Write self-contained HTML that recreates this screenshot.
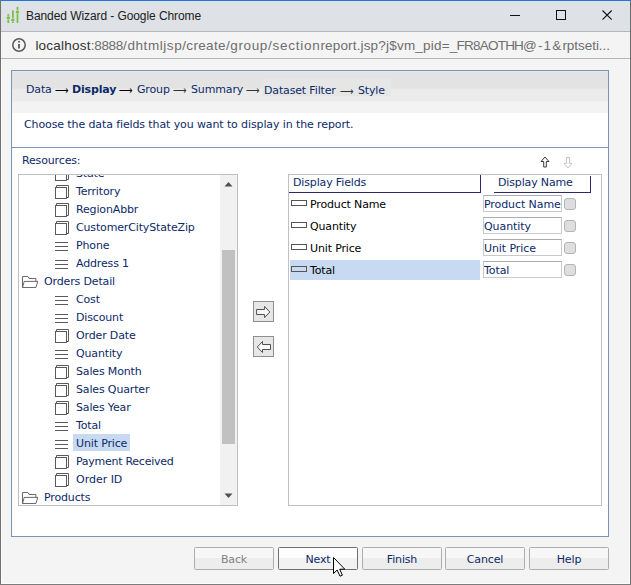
<!DOCTYPE html>
<html><head><meta charset="utf-8"><title>Banded Wizard - Google Chrome</title>
<style>
*{box-sizing:border-box;margin:0;padding:0}
html,body{width:631px;height:585px;overflow:hidden;background:#f4f4f4}
body{position:relative;font-family:"DejaVu Sans","Liberation Sans",sans-serif;font-size:11px;color:#0c2a68;letter-spacing:-0.15px}
.abs{position:absolute}
#titlebar{left:0;top:0;width:631px;height:32px;background:#dee1e6;border-top:1px solid #2277d4;border-bottom:1px solid #b4b6ba}
#title{left:26px;top:9px;font:12px "Liberation Sans",sans-serif;color:#202020;letter-spacing:-0.08px;white-space:nowrap}
#addr{left:0;top:32px;width:631px;height:27px;background:#f4f4f4;border-bottom:1px solid #b6b6b6}
#url{left:35.4px;top:38px;font:13.5px/16px "Liberation Sans",sans-serif;color:#6e6e6e;letter-spacing:-0.03px;white-space:nowrap}
#url span{position:absolute;top:0;white-space:pre}
#url span.h{color:#333}
#lborder{left:0;top:0;width:1px;height:585px;background:#6f6f6f}
#rborder{left:630px;top:1px;width:1px;height:584px;background:#6c6c6c}
#inner{left:1px;top:59px;width:629px;height:525px;border:1px solid #fcfcfc;border-top:none}
#bborder{left:0;top:584px;width:631px;height:1px;background:#7c7c7c}

#panel{left:11px;top:70px;width:598px;height:467px;border:1px solid #7894b8;background:#fff}
#crumbs{left:0;top:0;width:596px;height:42px;background:linear-gradient(#e8e8e8 0,#e8e8e8 1px,#e3e3e3 1px,#e3e3e3 17px,#e7e7e7 18px,#ebebeb 18px,#ebebeb 30px,#f3f3f3 31px,#f3f3f3 100%)}
#cbox{left:250px;top:8px;width:129px;height:17px;background:#e6e6e6}
.cr{top:12px;white-space:nowrap;line-height:13px}
.ar{top:13px;color:#000;transform:scaleX(0.87);transform-origin:0 50%}
#sep{left:0;top:76px;width:596px;height:1px;background:#7894b8}
#listL{left:18px;top:174px;width:220px;height:332px;border:1px solid #c0c0c0;background:#fff;overflow:hidden}
#listL .inner{left:0;top:0;width:201px;height:330px;overflow:hidden}
.ic{position:absolute;display:block}
.tl{position:absolute;white-space:nowrap;line-height:16px;height:16px;padding:0 2px}
.tl.sel{background:#c8daf2;height:17px;padding:2px 3px 0 3px;margin:-2px 0 0 -1px}
#sb{left:201px;top:0;width:17px;height:330px;background:#f1f1f1}
#thumb{left:2px;top:75px;width:13px;height:194px;background:#c1c1c1}
.btnsq{width:21px;height:21px;border:1px solid #8e8e8e;background:#e6e6e6}
#listR{left:288px;top:174px;width:314px;height:332px;border:1px solid #c0c0c0;background:#fff;overflow:hidden}
.rrow{left:1px;width:190px;height:20px}
.rrow.sel{background:#c8daf2}
.ricon{left:1px;top:6px;width:16px;height:6px;border:1px solid #555}
.rtxt{left:20px;top:3px;line-height:16px;color:#000;white-space:nowrap}
.inp{left:194px;width:79px;height:17px;border:1px solid #c9c9c9;border-top-color:#ababab;background:#fff;line-height:14px;padding:2px 0 0 0;letter-spacing:-0.08px;white-space:nowrap;overflow:hidden;color:#0c2a68}
.cb{left:275px;width:12px;height:12px;border:1px solid #b4b4b4;border-radius:3px;background:#dedede}
.btn{top:547px;width:80px;height:23px;border:1px solid #adadad;border-radius:1.5px;background:linear-gradient(#f7f7f7 0,#f7f7f7 46%,#ededed 50%,#ededed 100%);text-align:center;line-height:20px;padding-top:2px}
</style></head><body>
<div class="abs" id="titlebar"></div>
<svg class="abs" style="left:0;top:0" width="32" height="32" viewBox="0 0 32 32">
<g fill="#7ac143">
<rect x="7.4" y="14" width="1.8" height="9"/><rect x="6.8" y="16.8" width="3.2" height="2"/>
<rect x="12" y="10.4" width="1.8" height="12.6"/><rect x="11.3" y="19" width="3.2" height="2"/>
<rect x="16.6" y="6.8" width="1.8" height="16.2"/><rect x="15.9" y="11.1" width="3.2" height="2"/>
</g><g fill="#dee1e6" opacity="0.6"><rect x="7" y="15.7" width="2.6" height="0.9"/><rect x="7" y="19" width="2.6" height="0.9"/><rect x="11.6" y="17.8" width="2.6" height="0.9"/><rect x="11.6" y="21.2" width="2.6" height="0.8"/><rect x="16.2" y="9.9" width="2.6" height="0.9"/><rect x="16.2" y="13.3" width="2.6" height="0.8"/></g></svg>
<div class="abs" id="title">Banded Wizard - Google Chrome</div>
<svg class="abs" style="left:505px;top:5px" width="115" height="22" viewBox="0 0 115 22">
<path d="M5 10.5 H15" stroke="#111" stroke-width="1" fill="none"/>
<rect x="51.5" y="5.5" width="9" height="9" stroke="#111" stroke-width="1" fill="none"/>
<path d="M97.5 5.5 L106.7 14.7 M106.7 5.5 L97.5 14.7" stroke="#111" stroke-width="1.1" fill="none"/>
</svg>
<div class="abs" id="addr"></div>
<svg class="abs" style="left:11px;top:37px" width="16" height="16" viewBox="0 0 16 16">
<circle cx="8" cy="8" r="6.2" fill="none" stroke="#5a5a5a" stroke-width="1.5"/>
<path d="M8 7 V11.6" stroke="#5a5a5a" stroke-width="1.8" fill="none"/><circle cx="8" cy="4.8" r="1" fill="#5a5a5a"/>
</svg>
<div class="abs" id="url"><span class="h" style="left:0.0px;letter-spacing:0.223px">localhost</span><span style="left:55.3px;letter-spacing:-0.279px">:8888</span><span style="left:87.7px;letter-spacing:0.574px">/dhtmljsp</span><span style="left:146.9px;letter-spacing:0.331px">/create</span><span style="left:190.5px;letter-spacing:0.636px">/group</span><span style="left:232.6px;letter-spacing:0.734px">/section</span><span style="left:285.0px;letter-spacing:0.162px">report.jsp</span><span style="left:342.9px;letter-spacing:0.208px">?j$vm_pid=</span><span style="left:414.4px;letter-spacing:-0.774px">_FR8AOTHH</span><span style="left:487.7px;letter-spacing:1.145px">@-1&amp;</span><span style="left:527.0px;letter-spacing:-0.042px">rptseti...</span></div>

<div class="abs" id="panel">
 <div class="abs" id="crumbs"></div><div class="abs" id="cbox"></div>
 <span class="abs cr" style="left:14px">Data</span>
 <span class="abs cr ar" style="left:43px">&#10230;</span>
 <span class="abs cr" style="left:60px;font-weight:bold">Display</span>
 <span class="abs cr ar" style="left:107px">&#10230;</span>
 <span class="abs cr" style="left:125px">Group</span>
 <span class="abs cr ar" style="left:161px;color:#333">&#10230;</span>
 <span class="abs cr" style="left:179px">Summary</span>
 <span class="abs cr ar" style="left:234px;color:#333">&#10230;</span>
 <span class="abs cr" style="left:252px;top:13px">Dataset Filter</span>
 <span class="abs cr ar" style="left:328px;top:14px;color:#333">&#10230;</span>
 <span class="abs cr" style="left:346px;top:13px">Style</span>
 <span class="abs" style="left:12px;top:47px;white-space:nowrap;line-height:13px;letter-spacing:-0.11px">Choose the data fields that you want to display in the report.</span>
 <div class="abs" id="sep"></div>
 <span class="abs" style="left:10px;top:83px;white-space:nowrap;line-height:13px">Resources:</span>
</div>

<div class="abs" id="listL"><div class="abs inner">
<svg class="ic" style="left:36px;top:-8px" width="14" height="14" viewBox="0 0 14 14"><path d="M1.5 2.5 V0.5 H13.5 V12.5 H11.5" fill="none" stroke="#5a5a5a" stroke-width="1"/><rect x="0.5" y="2.5" width="11" height="11" fill="#fff" stroke="#5a5a5a" stroke-width="1"/></svg><span class="tl" style="left:55px;top:-9px">State</span>
<svg class="ic" style="left:36px;top:10px" width="14" height="14" viewBox="0 0 14 14"><path d="M1.5 2.5 V0.5 H13.5 V12.5 H11.5" fill="none" stroke="#5a5a5a" stroke-width="1"/><rect x="0.5" y="2.5" width="11" height="11" fill="#fff" stroke="#5a5a5a" stroke-width="1"/></svg><span class="tl" style="left:55px;top:9px">Territory</span>
<svg class="ic" style="left:36px;top:28px" width="14" height="14" viewBox="0 0 14 14"><path d="M1.5 2.5 V0.5 H13.5 V12.5 H11.5" fill="none" stroke="#5a5a5a" stroke-width="1"/><rect x="0.5" y="2.5" width="11" height="11" fill="#fff" stroke="#5a5a5a" stroke-width="1"/></svg><span class="tl" style="left:55px;top:27px">RegionAbbr</span>
<svg class="ic" style="left:36px;top:46px" width="14" height="14" viewBox="0 0 14 14"><path d="M1.5 2.5 V0.5 H13.5 V12.5 H11.5" fill="none" stroke="#5a5a5a" stroke-width="1"/><rect x="0.5" y="2.5" width="11" height="11" fill="#fff" stroke="#5a5a5a" stroke-width="1"/></svg><span class="tl" style="left:55px;top:45px">CustomerCityStateZip</span>
<svg class="ic" style="left:36px;top:66px" width="13" height="11" viewBox="0 0 13 11"><path d="M0 1.5 H13 M0 5.5 H13 M0 9.5 H13" fill="none" stroke="#5a5a5a" stroke-width="1"/></svg><span class="tl" style="left:55px;top:63px">Phone</span>
<svg class="ic" style="left:36px;top:84px" width="13" height="11" viewBox="0 0 13 11"><path d="M0 1.5 H13 M0 5.5 H13 M0 9.5 H13" fill="none" stroke="#5a5a5a" stroke-width="1"/></svg><span class="tl" style="left:55px;top:81px">Address 1</span>
<svg class="ic" style="left:0;top:98px" width="22" height="18" viewBox="0 0 22 18"><path d="M3.5 14.5 V3.5 H9 L10 5.5 H16.9 V8.4 M5.2 8.4 H18.8 L16.9 14.5 H3.5 L5.2 8.4" fill="none" stroke="#5a5a5a" stroke-width="0.9" stroke-linejoin="round"/></svg><span class="tl" style="left:23px;top:99px">Orders Detail</span>
<svg class="ic" style="left:36px;top:120px" width="13" height="11" viewBox="0 0 13 11"><path d="M0 1.5 H13 M0 5.5 H13 M0 9.5 H13" fill="none" stroke="#5a5a5a" stroke-width="1"/></svg><span class="tl" style="left:55px;top:117px">Cost</span>
<svg class="ic" style="left:36px;top:138px" width="13" height="11" viewBox="0 0 13 11"><path d="M0 1.5 H13 M0 5.5 H13 M0 9.5 H13" fill="none" stroke="#5a5a5a" stroke-width="1"/></svg><span class="tl" style="left:55px;top:135px">Discount</span>
<svg class="ic" style="left:36px;top:154px" width="14" height="14" viewBox="0 0 14 14"><path d="M1.5 2.5 V0.5 H13.5 V12.5 H11.5" fill="none" stroke="#5a5a5a" stroke-width="1"/><rect x="0.5" y="2.5" width="11" height="11" fill="#fff" stroke="#5a5a5a" stroke-width="1"/></svg><span class="tl" style="left:55px;top:153px">Order Date</span>
<svg class="ic" style="left:36px;top:174px" width="13" height="11" viewBox="0 0 13 11"><path d="M0 1.5 H13 M0 5.5 H13 M0 9.5 H13" fill="none" stroke="#5a5a5a" stroke-width="1"/></svg><span class="tl" style="left:55px;top:171px">Quantity</span>
<svg class="ic" style="left:36px;top:190px" width="14" height="14" viewBox="0 0 14 14"><path d="M1.5 2.5 V0.5 H13.5 V12.5 H11.5" fill="none" stroke="#5a5a5a" stroke-width="1"/><rect x="0.5" y="2.5" width="11" height="11" fill="#fff" stroke="#5a5a5a" stroke-width="1"/></svg><span class="tl" style="left:55px;top:189px">Sales Month</span>
<svg class="ic" style="left:36px;top:208px" width="14" height="14" viewBox="0 0 14 14"><path d="M1.5 2.5 V0.5 H13.5 V12.5 H11.5" fill="none" stroke="#5a5a5a" stroke-width="1"/><rect x="0.5" y="2.5" width="11" height="11" fill="#fff" stroke="#5a5a5a" stroke-width="1"/></svg><span class="tl" style="left:55px;top:207px">Sales Quarter</span>
<svg class="ic" style="left:36px;top:226px" width="14" height="14" viewBox="0 0 14 14"><path d="M1.5 2.5 V0.5 H13.5 V12.5 H11.5" fill="none" stroke="#5a5a5a" stroke-width="1"/><rect x="0.5" y="2.5" width="11" height="11" fill="#fff" stroke="#5a5a5a" stroke-width="1"/></svg><span class="tl" style="left:55px;top:225px">Sales Year</span>
<svg class="ic" style="left:36px;top:246px" width="13" height="11" viewBox="0 0 13 11"><path d="M0 1.5 H13 M0 5.5 H13 M0 9.5 H13" fill="none" stroke="#5a5a5a" stroke-width="1"/></svg><span class="tl" style="left:55px;top:243px">Total</span>
<svg class="ic" style="left:36px;top:264px" width="13" height="11" viewBox="0 0 13 11"><path d="M0 1.5 H13 M0 5.5 H13 M0 9.5 H13" fill="none" stroke="#5a5a5a" stroke-width="1"/></svg><span class="tl sel" style="left:55px;top:261px">Unit Price</span>
<svg class="ic" style="left:36px;top:280px" width="14" height="14" viewBox="0 0 14 14"><path d="M1.5 2.5 V0.5 H13.5 V12.5 H11.5" fill="none" stroke="#5a5a5a" stroke-width="1"/><rect x="0.5" y="2.5" width="11" height="11" fill="#fff" stroke="#5a5a5a" stroke-width="1"/></svg><span class="tl" style="left:55px;top:279px;letter-spacing:-0.27px">Payment Received</span>
<svg class="ic" style="left:36px;top:298px" width="14" height="14" viewBox="0 0 14 14"><path d="M1.5 2.5 V0.5 H13.5 V12.5 H11.5" fill="none" stroke="#5a5a5a" stroke-width="1"/><rect x="0.5" y="2.5" width="11" height="11" fill="#fff" stroke="#5a5a5a" stroke-width="1"/></svg><span class="tl" style="left:55px;top:297px;letter-spacing:-0.02px">Order ID</span>
<svg class="ic" style="left:0;top:314px" width="22" height="18" viewBox="0 0 22 18"><path d="M3.5 14.5 V3.5 H9 L10 5.5 H16.9 V8.4 M5.2 8.4 H18.8 L16.9 14.5 H3.5 L5.2 8.4" fill="none" stroke="#5a5a5a" stroke-width="0.9" stroke-linejoin="round"/></svg><span class="tl" style="left:23px;top:315px">Products</span>
</div>
<div class="abs" id="sb"><div class="abs" id="thumb"></div>
<svg class="abs" style="left:4px;top:6px" width="9" height="6" viewBox="0 0 9 6"><path d="M0.5 5.5 L4.5 1 L8.5 5.5 Z" fill="#505050"/></svg>
<svg class="abs" style="left:4px;top:318px" width="9" height="6" viewBox="0 0 9 6"><path d="M0.5 0.5 L4.5 5 L8.5 0.5 Z" fill="#505050"/></svg>
</div></div>

<div class="abs btnsq" style="left:253px;top:301px"><svg class="abs" style="left:2px;top:3px" width="16" height="14" viewBox="0 0 16 14"><path d="M0.6 4.5 H8.6 V1.4 L13.8 7 L8.6 12.6 V9.5 H0.6 Z" fill="#f8f8f8" stroke="#505050" stroke-width="1"/></svg></div>
<div class="abs btnsq" style="left:253px;top:336px"><svg class="abs" style="left:2px;top:3px" width="16" height="14" viewBox="0 0 16 14"><path d="M14.5 4.5 H6.5 V1.5 L1.3 7 L6.5 12.5 V9.5 H14.5 Z" fill="#f8f8f8" stroke="#505050" stroke-width="1"/></svg></div>

<svg class="abs" style="left:535px;top:150px" width="45" height="24" viewBox="0 0 45 24">
<path d="M10 7 L6 11.5 H8.7 V17 H11.3 V11.5 H14 Z" fill="#fff" stroke="#3a3a3a" stroke-width="1"/>
<path d="M33 18 L29 13.5 H31.5 V7.5 H34.5 V13.5 H37 Z" fill="#fff" stroke="#c4c4c4" stroke-width="1"/>
</svg>

<div class="abs" id="listR">
 <span class="abs" style="left:4px;top:1px;line-height:13px;white-space:nowrap">Display Fields</span>
 <div class="abs" style="left:0;top:17px;width:192px;height:1px;background:#2b2b6b"></div>
 <div class="abs" style="left:191px;top:0;width:1px;height:18px;background:#2b2b6b"></div>
 <span class="abs" style="left:209px;top:1px;line-height:13px;white-space:nowrap">Display Name</span>
 <div class="abs" style="left:205px;top:17px;width:97px;height:1px;background:#2b2b6b"></div>
 <div class="abs" style="left:301px;top:1px;width:1px;height:17px;background:#2b2b6b"></div>
<div class="abs rrow" style="top:19px"><div class="abs ricon"></div><span class="abs rtxt">Product Name</span></div>
<div class="abs inp" style="top:20px">Product Name</div><div class="abs cb" style="top:23px"></div>
<div class="abs rrow" style="top:41px"><div class="abs ricon"></div><span class="abs rtxt">Quantity</span></div>
<div class="abs inp" style="top:42px">Quantity</div><div class="abs cb" style="top:45px"></div>
<div class="abs rrow" style="top:63px"><div class="abs ricon"></div><span class="abs rtxt">Unit Price</span></div>
<div class="abs inp" style="top:64px">Unit Price</div><div class="abs cb" style="top:67px"></div>
<div class="abs rrow sel" style="top:85px"><div class="abs ricon"></div><span class="abs rtxt">Total</span></div>
<div class="abs inp" style="top:86px">Total</div><div class="abs cb" style="top:89px"></div>

</div>

<div class="abs btn" style="left:194px;color:#838383">Back</div>
<div class="abs btn" style="left:278px;border-color:#707070;background:linear-gradient(#fdfdfd 0,#fdfdfd 46%,#f2f2f2 50%,#f2f2f2 100%)">Next</div>
<div class="abs btn" style="left:362px">Finish</div>
<div class="abs btn" style="left:445px">Cancel</div>
<div class="abs btn" style="left:529px">Help</div>
<svg class="abs" style="left:332px;top:556px" width="14" height="22" viewBox="0 0 14 22">
<path d="M1.5 1.5 V17.5 L5.2 14 L8 20.2 L10.4 19.2 L7.7 13.2 H12.8 Z" fill="#fff" stroke="#000" stroke-width="1"/>
</svg>
<div class="abs" id="lborder"></div><div class="abs" id="rborder"></div><div class="abs" id="bborder"></div><div class="abs" id="inner"></div>
</body></html>
